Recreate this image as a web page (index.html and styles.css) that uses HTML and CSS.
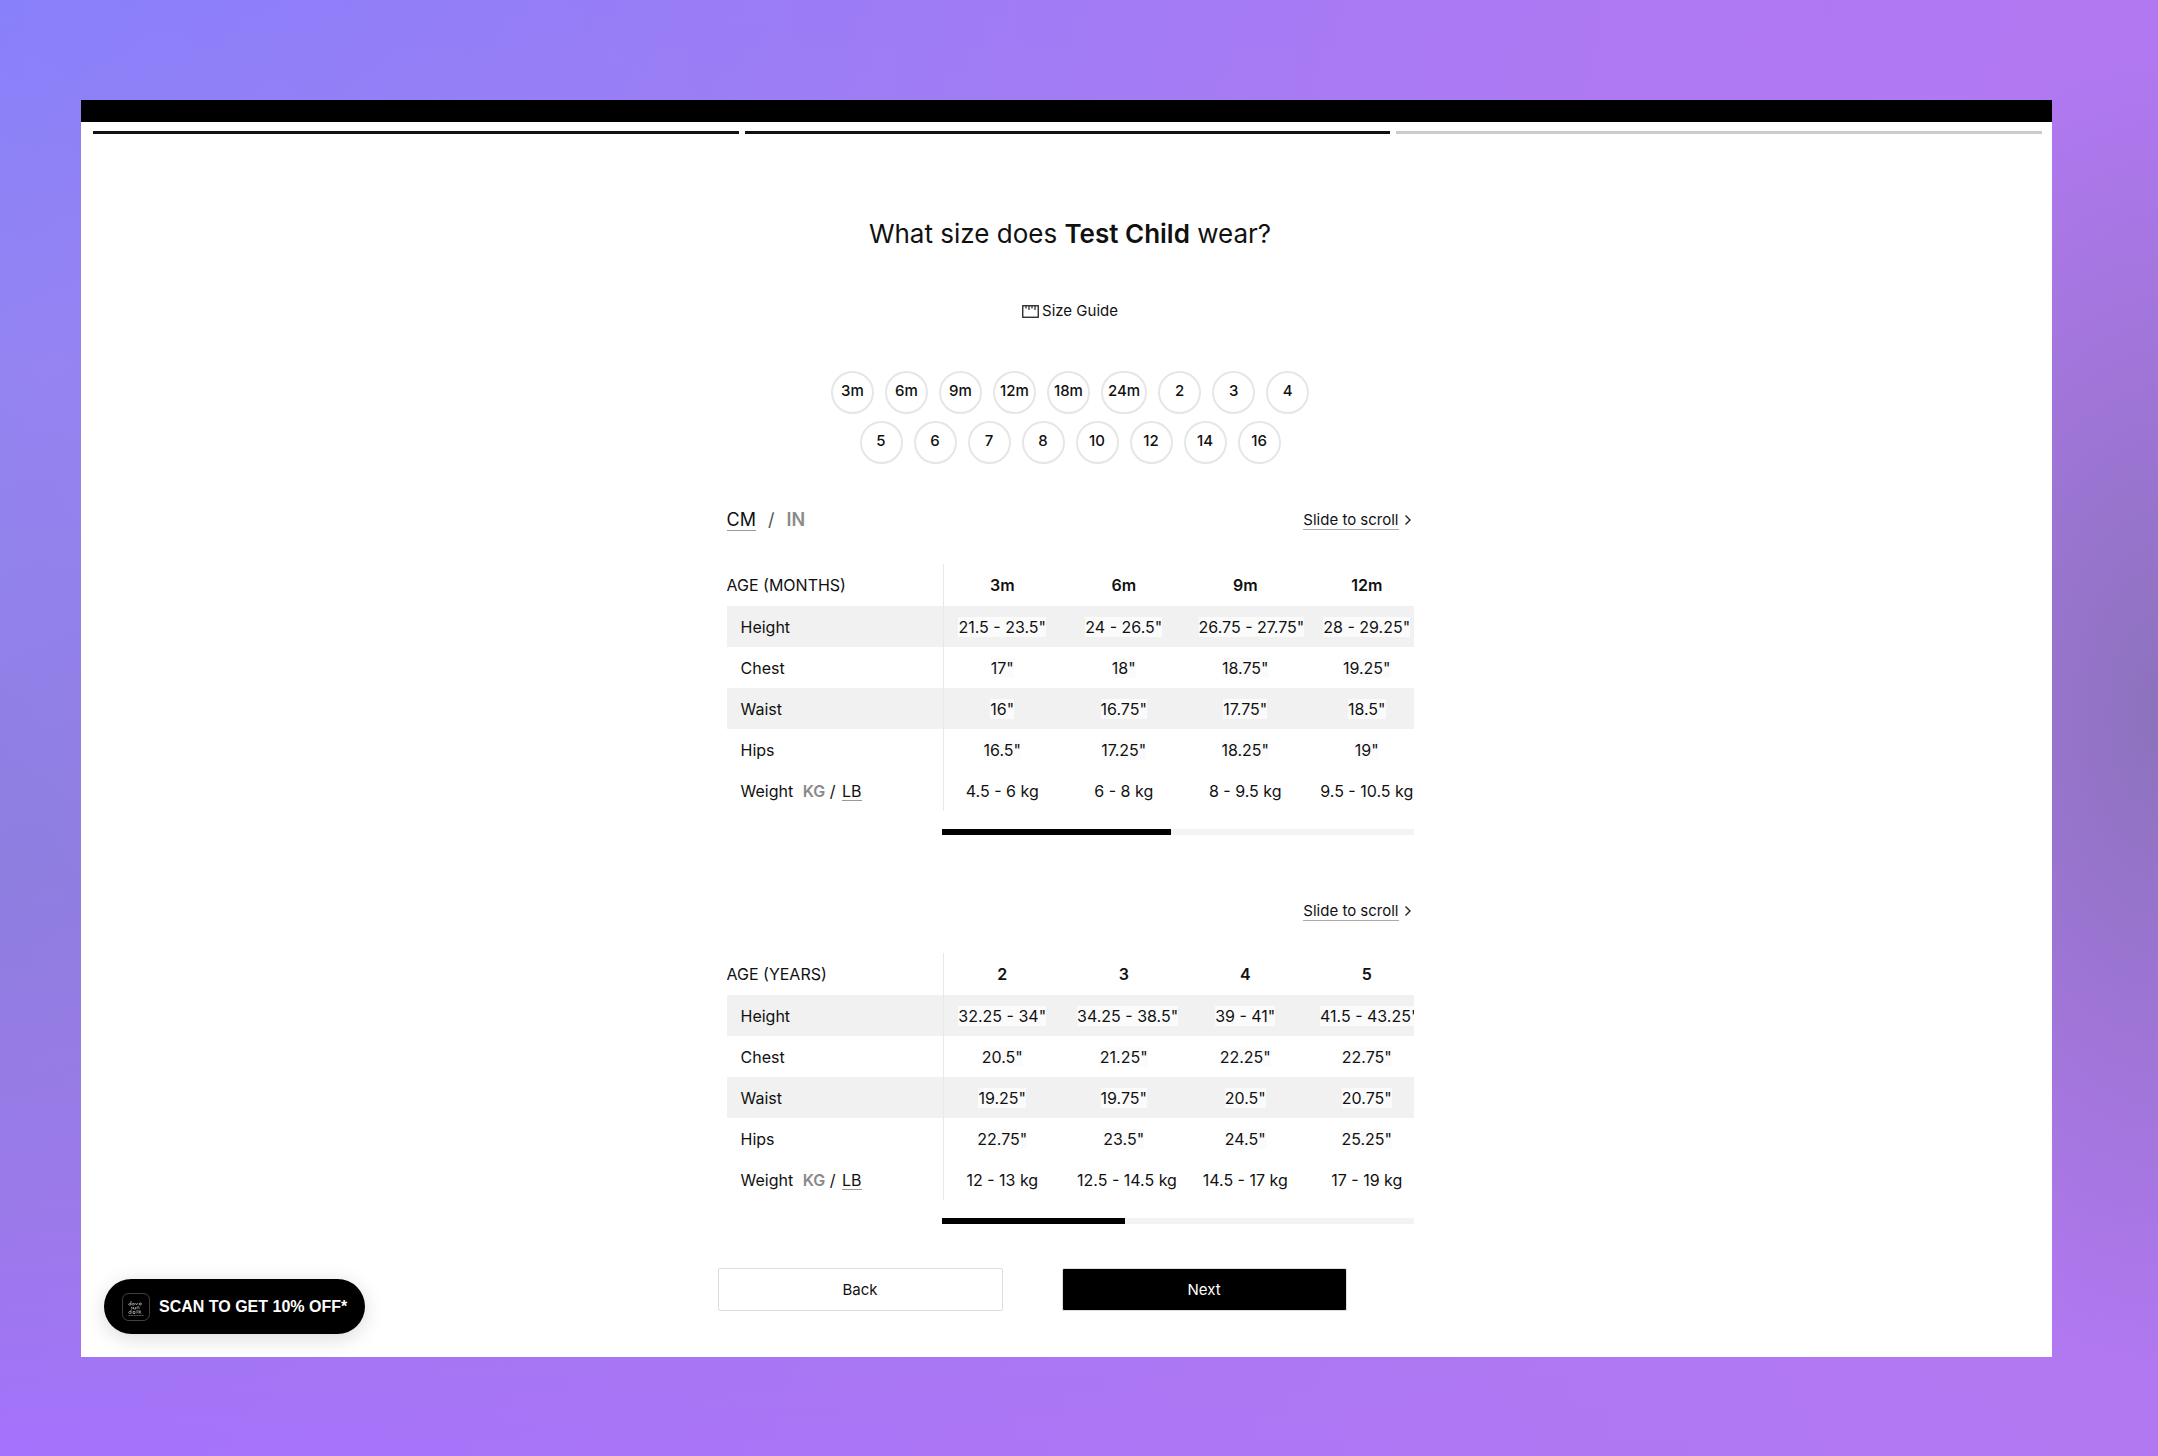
FILE: index.html
```html
<!DOCTYPE html>
<html lang="en">
<head>
    <meta charset="UTF-8">
    <meta name="viewport" content="width=device-width, initial-scale=1.0">
    <title>Choose a size</title>
    <link rel="stylesheet" href="styles.css">
</head>
<body>
    <div class="page">
        <div class="top-bar"></div>
        <div class="progress">
            <span class="step done"></span>
            <span class="step done"></span>
            <span class="step"></span>
        </div>

        <main class="content">
            <h1>What size does <strong>Test Child</strong> wear?</h1>

            <a class="size-guide" href="#guide">
                <svg width="17" height="13" viewBox="0 0 17 13" fill="none" stroke="#222" aria-hidden="true">
                    <rect x="0.75" y="0.75" width="15.5" height="11.5" stroke-width="1.3"/>
                    <path d="M4 1v2.500M7 1v4M10 1v2.500M13 1v4" stroke-width="1.2"/>
                </svg>
                Size Guide
            </a>

            <div class="sizes">
                <div class="size-row">
                    <button type="button">3m</button>
                    <button type="button">6m</button>
                    <button type="button">9m</button>
                    <button type="button">12m</button>
                    <button type="button">18m</button>
                    <button type="button">24m</button>
                    <button type="button">2</button>
                    <button type="button">3</button>
                    <button type="button">4</button>
                </div>
                <div class="size-row">
                    <button type="button">5</button>
                    <button type="button">6</button>
                    <button type="button">7</button>
                    <button type="button">8</button>
                    <button type="button">10</button>
                    <button type="button">12</button>
                    <button type="button">14</button>
                    <button type="button">16</button>
                </div>
            </div>

            <section class="guide" id="guide">
                <div class="guide-head">
                    <div class="units">
                        <button type="button" class="unit active">CM</button>
                        <span class="slash">/</span>
                        <button type="button" class="unit">IN</button>
                    </div>
                    <div class="slide">
                        <span>Slide to scroll</span>
                        <svg width="8" height="12" viewBox="0 0 8 12" fill="none" stroke="#222" stroke-width="1.4" aria-hidden="true"><path d="M1.5 1.5L6 6l-4.5 4.5"/></svg>
                    </div>
                </div>
                <div class="table-wrap">
                    <table>
                        <thead>
                            <tr><th scope="col">AGE (MONTHS)</th><th scope="col">3m</th><th scope="col">6m</th><th scope="col">9m</th><th scope="col">12m</th></tr>
                        </thead>
                        <tbody>
                            <tr><th scope="row">Height</th><td><span>21.5 - 23.5"</span></td><td><span>24 - 26.5"</span></td><td><span>26.75 - 27.75"</span></td><td><span>28 - 29.25"</span></td></tr>
                            <tr><th scope="row">Chest</th><td><span>17"</span></td><td><span>18"</span></td><td><span>18.75"</span></td><td><span>19.25"</span></td></tr>
                            <tr><th scope="row">Waist</th><td><span>16"</span></td><td><span>16.75"</span></td><td><span>17.75"</span></td><td><span>18.5"</span></td></tr>
                            <tr><th scope="row">Hips</th><td><span>16.5"</span></td><td><span>17.25"</span></td><td><span>18.25"</span></td><td><span>19"</span></td></tr>
                            <tr><th scope="row">Weight <button type="button" class="weight">KG</button> / <button type="button" class="weight active">LB</button></th><td>4.5 - 6 kg</td><td>6 - 8 kg</td><td>8 - 9.5 kg</td><td>9.5 - 10.5 kg</td></tr>
                        </tbody>
                    </table>
                </div>
                <div class="scrollbar"><div class="thumb thumb-months"></div></div>
            </section>

            <section class="guide guide-years">
                <div class="guide-head">
                    <div class="slide">
                        <span>Slide to scroll</span>
                        <svg width="8" height="12" viewBox="0 0 8 12" fill="none" stroke="#222" stroke-width="1.4" aria-hidden="true"><path d="M1.5 1.5L6 6l-4.5 4.5"/></svg>
                    </div>
                </div>
                <div class="table-wrap">
                    <table>
                        <thead>
                            <tr><th scope="col">AGE (YEARS)</th><th scope="col">2</th><th scope="col">3</th><th scope="col">4</th><th scope="col">5</th></tr>
                        </thead>
                        <tbody>
                            <tr><th scope="row">Height</th><td><span>32.25 - 34"</span></td><td><span>34.25 - 38.5"</span></td><td><span>39 - 41"</span></td><td><span>41.5 - 43.25"</span></td></tr>
                            <tr><th scope="row">Chest</th><td><span>20.5"</span></td><td><span>21.25"</span></td><td><span>22.25"</span></td><td><span>22.75"</span></td></tr>
                            <tr><th scope="row">Waist</th><td><span>19.25"</span></td><td><span>19.75"</span></td><td><span>20.5"</span></td><td><span>20.75"</span></td></tr>
                            <tr><th scope="row">Hips</th><td><span>22.75"</span></td><td><span>23.5"</span></td><td><span>24.5"</span></td><td><span>25.25"</span></td></tr>
                            <tr><th scope="row">Weight <button type="button" class="weight">KG</button> / <button type="button" class="weight active">LB</button></th><td>12 - 13 kg</td><td>12.5 - 14.5 kg</td><td>14.5 - 17 kg</td><td>17 - 19 kg</td></tr>
                        </tbody>
                    </table>
                </div>
                <div class="scrollbar"><div class="thumb thumb-years"></div></div>
            </section>

            <div class="actions">
                <button type="button" class="btn back">Back</button>
                <button type="button" class="btn next">Next</button>
            </div>
        </main>

        <button type="button" class="promo">
            <svg width="28" height="28" viewBox="0 0 28 28" fill="none" stroke="#999" stroke-width="0.9" aria-hidden="true">
                <rect x="0.5" y="0.5" width="27" height="27" rx="6" stroke="#4a4a4a"/>
                <path d="M9 8v4M9 10.5c-3-.8-3 2-1 1.6l1-.4M11 10.5c2-.8 2 1.800 0 1.500s-1-1.700 1-1.500M13.500 10l1 2 1.500-2M17 11h2.500c0-1.500-2.500-1.200-2.300.2s1.800.8 2.300.3M9 14.500c2-.8 2 1.500 0 1.500M11.500 14v2h2v-2M15 16v-2c1-.5 2-.3 2 0v2M9 17v3.500M9 18.500c-3-.8-3 2-1 2l1-.4M11 18.500h2v2h-2zM15 17v3.500M17 17v3.500M17 19l2-1M17 19l2.300 1.500"/>
                <path d="M6.500 22.500h15" stroke="#666" stroke-dasharray="2 0.600"/>
            </svg>
            SCAN TO GET 10% OFF*
        </button>
    </div>
</body>
</html>
```
FILE: styles.css
```css
* {
    box-sizing: border-box;
}

body {
    font-family: Inter, "Liberation Sans", sans-serif;
    font-size: 16px;
    color: #111;
    margin: 0;
    padding: 100px 106px 99px 81px;
    min-height: 100vh;
    background:
        radial-gradient(ellipse 16% 46% at 100% 49%, #8c72bc 0, rgba(140, 114, 188, 0) 100%),
        linear-gradient(90deg, rgba(178, 120, 242, 0), rgba(178, 120, 242, 0.9) 75%, #b278f2),
        linear-gradient(180deg, #8880fa, #9484f2 25%, #8e7ee0 60%, #9a7ae8 82%, #a472fc);
}

button {
    font-family: inherit;
    color: inherit;
    background: none;
    border: none;
    padding: 0;
    cursor: pointer;
}

.page {
    position: relative;
    background-color: #fff;
}

.top-bar {
    height: 22px;
    background-color: #000;
}

.progress {
    display: flex;
    gap: 6px;
    padding: 9px 10px 0 12px;
}

.step {
    flex: 1;
    height: 3px;
    background-color: #ccc;
}

.step.done {
    background-color: #111;
}

.content {
    display: flex;
    flex-direction: column;
    align-items: center;
    padding: 80px 0 46px 7px;
}

h1 {
    margin: 0;
    font-size: 26px;
    font-weight: 400;
    line-height: 40px;
}

h1 strong {
    font-weight: 600;
}

.size-guide {
    display: flex;
    align-items: center;
    gap: 3px;
    margin-top: 47px;
    font-size: 15px;
    line-height: 20px;
    color: inherit;
    text-decoration: none;
}

.sizes {
    display: flex;
    flex-direction: column;
    gap: 7px;
    margin-top: 50px;
}

.size-row {
    display: flex;
    justify-content: center;
    gap: 11px;
}

.size-row button {
    min-width: 43px;
    height: 43px;
    padding: 0 5px 4px;
    border: 2px solid #e6e6e6;
    border-radius: 22px;
    font-size: 15px;
    font-weight: 500;
}

.guide {
    width: 687px;
    max-width: 100%;
    margin-top: 44px;
}

.guide-years {
    margin-top: 64px;
}

.guide-head {
    display: flex;
    align-items: center;
    justify-content: space-between;
    min-height: 24px;
    margin-bottom: 32px;
}

.guide-years .guide-head {
    margin-bottom: 30px;
}

.units {
    display: flex;
    align-items: center;
    gap: 12px;
    font-size: 18px;
    line-height: 20px;
}

.unit {
    font-size: 18px;
    line-height: 20px;
    font-weight: 600;
    color: #8a8a8a;
}

.slash {
    color: #555;
}

.unit.active {
    font-weight: 400;
    color: #111;
    border-bottom: 1px solid #999;
}

.slide {
    display: flex;
    align-items: center;
    gap: 5px;
    margin-left: auto;
    padding-right: 2px;
    font-size: 15px;
    line-height: 18px;
}

.slide span {
    border-bottom: 1px solid #aaa;
}

.table-wrap {
    overflow: hidden;
}

table {
    width: 701px;
    table-layout: fixed;
    border-collapse: collapse;
}

th,
td {
    height: 41px;
    padding: 0 14px;
    font-weight: 400;
    text-align: center;
    white-space: nowrap;
}

thead th {
    height: 42px;
    font-weight: 600;
}

thead th:first-child {
    width: 215px;
    padding-left: 0;
    font-weight: 400;
}

th:first-child {
    text-align: left;
}

th:nth-child(2),
td:nth-child(2) {
    background: linear-gradient(#e8e8e8, #e8e8e8) 1px 0 / 1px 100% no-repeat;
}

tbody tr:nth-child(odd):not(:last-child) {
    background-color: #f1f1f1;
}

td span {
    background-color: #fbfbfb;
}

.weight {
    margin-left: 5px;
    font-size: 16px;
    line-height: 18px;
    font-weight: 600;
    color: #8a8a8a;
}

.weight.active {
    margin-left: 2px;
    font-weight: 400;
    color: #111;
    border-bottom: 1px solid #999;
}

.scrollbar {
    height: 6px;
    margin: 18px 0 0 215px;
    background-color: #f3f3f3;
}

.thumb {
    height: 100%;
    background-color: #000;
}

.thumb-months {
    width: 229px;
}

.thumb-years {
    width: 183px;
}

.actions {
    display: flex;
    gap: 59px;
    margin-top: 44px;
    margin-right: 76px;
}

.btn {
    width: 285px;
    height: 43px;
    font-size: 15px;
    border: 1px solid #ddd;
    border-radius: 2px;
}

.next {
    background-color: #000;
    color: #fff;
}

/* floats over the bottom left corner of the page */
.promo {
    position: absolute;
    left: 23px;
    bottom: 23px;
    display: flex;
    align-items: center;
    gap: 9px;
    height: 55px;
    padding: 0 18px;
    border-radius: 28px;
    background-color: #000;
    color: #fff;
    font-family: "Liberation Sans", Arial, sans-serif;
    font-size: 16px;
    font-weight: 700;
    box-shadow: 0 4px 20px rgba(0, 0, 0, 0.15);
}
```
